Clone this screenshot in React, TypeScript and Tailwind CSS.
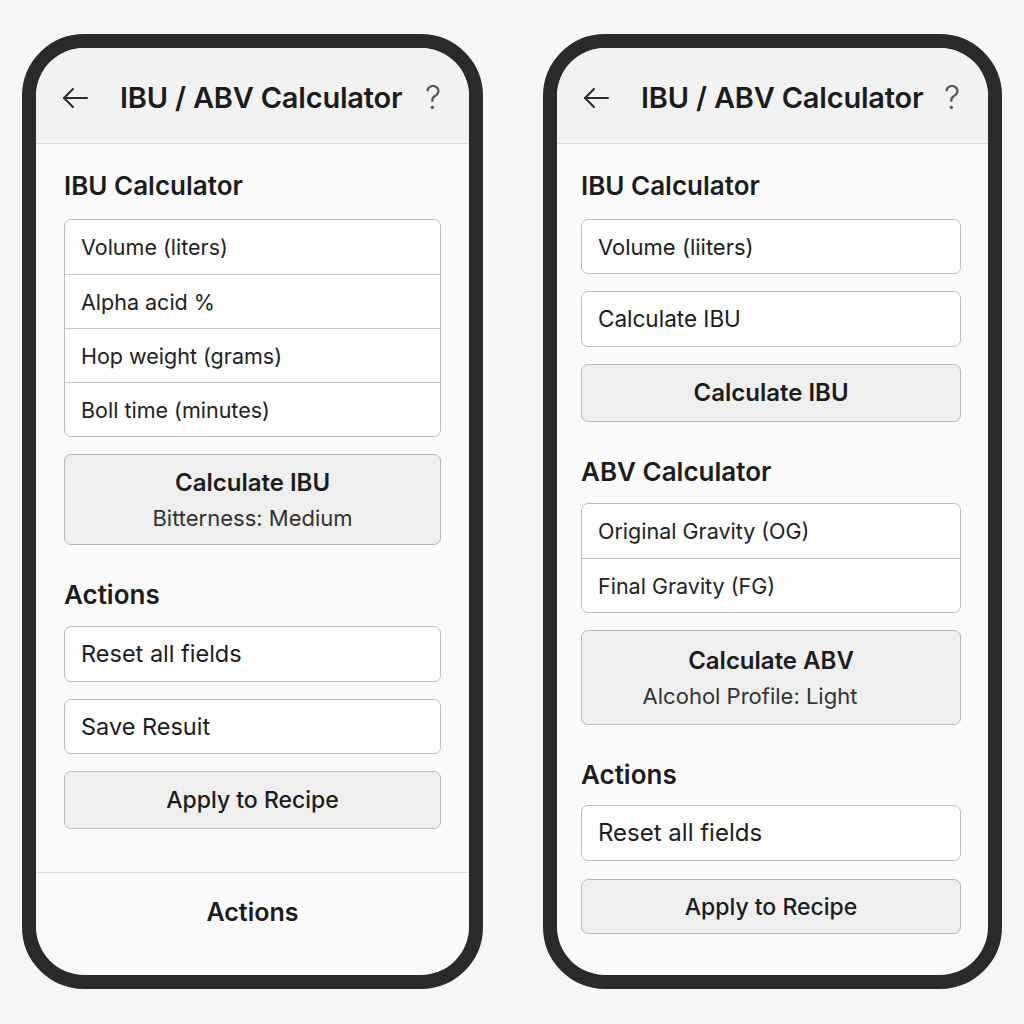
import React from 'react';

const font = { fontFamily: 'Inter, "Noto Sans", sans-serif' };

function Header() {
  return (
    <div className="flex h-[96px] shrink-0 items-center border-b border-[#dcdcdc] bg-[#f2f2f2] pl-[26px] pr-[28px] pt-[5px]">
      <svg width="26" height="22" viewBox="0 0 26 22" fill="none" stroke="#2a2a2a" strokeWidth="2" strokeLinecap="round" strokeLinejoin="round">
        <path d="M25 11H2" />
        <path d="M11 2L2 11l9 9" />
      </svg>
      <div className="ml-[32px] text-[29px] font-semibold leading-[34px] tracking-[-0.2px] text-[#1c1c1c]">
        IBU / ABV Calculator
      </div>
      <div className="ml-auto text-[32px] font-light leading-[34px] text-[#555]">?</div>
    </div>
  );
}

function SectionTitle({ children, className = '' }: { children: React.ReactNode; className?: string }) {
  return <div className={`text-[26px] font-semibold leading-[32px] text-[#1c1c1c] ${className}`}>{children}</div>;
}

function FieldGroup({ items }: { items: string[] }) {
  return (
    <div className="overflow-hidden rounded-[7px] border border-[#bdbdbd] bg-[#fdfdfd]">
      {items.map((label, i) => (
        <div
          key={label}
          className={`flex h-[54px] items-center px-[16px] text-[21.5px] leading-[26px] text-[#222] ${i > 0 ? 'border-t border-[#c4c4c4]' : ''}`}
        >
          {label}
        </div>
      ))}
    </div>
  );
}

function Field({ label, h = 'h-[56px]', size = 'text-[22px]', className = '' }: { label: string; h?: string; size?: string; className?: string }) {
  return (
    <div className={`flex ${h} items-center rounded-[7px] border border-[#bdbdbd] bg-[#fdfdfd] px-[16px] ${size} leading-[28px] text-[#1c1c1c] ${className}`}>
      {label}
    </div>
  );
}

function GrayButton({
  title,
  sub,
  h,
  bold = false,
  subClass = '',
  className = '',
}: {
  title: string;
  sub?: string;
  h: string;
  bold?: boolean;
  subClass?: string;
  className?: string;
}) {
  return (
    <div className={`flex ${h} flex-col items-center justify-center rounded-[7px] border border-[#b8b8b8] bg-[#efefef] ${className}`}>
      <div className={`leading-[30px] text-[#1c1c1c] ${bold ? 'text-[24px] font-semibold' : 'text-[23px] font-medium'}`}>{title}</div>
      {sub && <div className={`mt-[6px] text-[22px] leading-[28px] text-[#333] ${subClass}`}>{sub}</div>}
    </div>
  );
}

function Phone({ width, children }: { width: string; children: React.ReactNode }) {
  return (
    <div className={`${width} h-[955px] shrink-0 rounded-[62px] border-[14px] border-[#2a2a2a] bg-[#2a2a2a]`}>
      <div className="flex h-full flex-col overflow-hidden rounded-[48px] bg-[#fafafa]">{children}</div>
    </div>
  );
}

export default function App() {
  return (
    <div className="flex min-h-[1024px] w-[1024px] gap-[60px] bg-[#f6f6f6] pl-[22px] pt-[34px]" style={font}>
      <Phone width="w-[461px]">
        <Header />
        <div className="flex-1 px-[28px] pt-[26px]">
          <SectionTitle className="mb-[17px]">IBU Calculator</SectionTitle>
          <FieldGroup items={['Volume (liters)', 'Alpha acid %', 'Hop weight (grams)', 'Boll time (minutes)']} />
          <GrayButton title="Calculate IBU" sub="Bitterness: Medium" h="h-[91px]" bold className="mt-[17px]" />
          <SectionTitle className="mb-[15px] mt-[34px]">Actions</SectionTitle>
          <Field label="Reset all fields" size="text-[23.5px]" />
          <Field label="Save Resuit" h="h-[55px]" size="text-[23.5px]" className="mt-[17px]" />
          <GrayButton title="Apply to Recipe" h="h-[58px]" className="mt-[17px]" />
        </div>
        <div className="flex h-[103px] shrink-0 justify-center border-t border-[#dcdcdc] pt-[24px] text-[25px] font-semibold leading-[30px] text-[#1c1c1c]">
          Actions
        </div>
      </Phone>

      <Phone width="w-[459px]">
        <Header />
        <div className="flex-1 pl-[24px] pr-[27px] pt-[26px]">
          <SectionTitle className="mb-[17px]">IBU Calculator</SectionTitle>
          <Field label="Volume (liiters)" h="h-[55px]" />
          <Field label="Calculate IBU" size="text-[22.5px]" className="mt-[17px]" />
          <GrayButton title="Calculate IBU" h="h-[58px]" bold className="mt-[17px]" />
          <SectionTitle className="mb-[15px] mt-[34px]">ABV Calculator</SectionTitle>
          <FieldGroup items={['Original Gravity (OG)', 'Final Gravity (FG)']} />
          <GrayButton
            title="Calculate ABV"
            sub="Alcohol Profile: Light"
            h="h-[95px]"
            bold
            subClass="mr-[42px]"
            className="mt-[17px]"
          />
          <SectionTitle className="mb-[14px] mt-[34px]">Actions</SectionTitle>
          <Field label="Reset all fields" size="text-[24px]" />
          <GrayButton title="Apply to Recipe" h="h-[55px]" className="mt-[18px]" />
        </div>
      </Phone>
    </div>
  );
}
